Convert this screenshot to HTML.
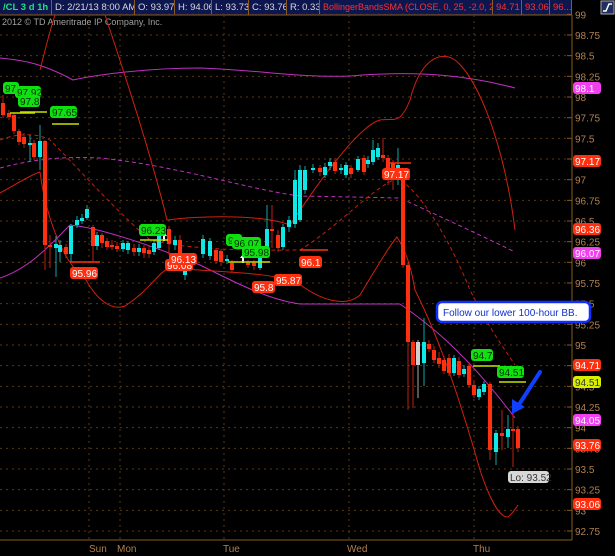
<!DOCTYPE html>
<html><head><meta charset="utf-8">
<style>
body{margin:0;background:#000;width:615px;height:556px;overflow:hidden;font-family:"Liberation Sans",sans-serif}
#hdr{position:absolute;left:0;top:0;width:572px;height:15px;background:#0e1650;font-size:9.5px;line-height:15px;white-space:nowrap}
#hdr div{position:absolute;top:0;height:15px;overflow:hidden;border-right:1px solid #8a5a20;padding-left:3px;box-sizing:border-box;color:#d8d8d8}
</style></head><body>
<div id="hdr">
<div style="left:0;width:52px;color:#20e080;font-weight:bold">/CL 3 d 1h</div>
<div style="left:52px;width:83px">D: 2/21/13 8:00 AM</div>
<div style="left:135px;width:40px">O: 93.97</div>
<div style="left:175px;width:37px">H: 94.06</div>
<div style="left:212px;width:37px">L: 93.73</div>
<div style="left:249px;width:38px">C: 93.76</div>
<div style="left:287px;width:33px">R: 0.33</div>
<div style="left:320px;width:173px;color:#ff3030;font-size:9px">BollingerBandsSMA (CLOSE, 0, 25, -2.0, 2.0)</div>
<div style="left:493px;width:29px;color:#ff3030">94.71</div>
<div style="left:522px;width:28px;color:#ff3030">93.06</div>
<div style="left:550px;width:22px;color:#ff3030">96...</div>
</div>
<svg id="s" width="615" height="556" style="position:absolute;left:0;top:0" font-family="Liberation Sans, sans-serif">
<rect x="601" y="1" width="13" height="13" fill="#203060" stroke="#aaa"/>
<path d="M603 11h3l3-7h3" stroke="#fff" fill="none" stroke-width="1.5"/>
<text x="2" y="25" fill="#a0a0a0" font-size="9">2012 © TD Ameritrade IP Company, Inc.</text>
<line x1="0" y1="15" x2="572" y2="15" stroke="#8a5a20"/>
<line x1="572" y1="15" x2="572" y2="540" stroke="#8a5a20"/>
<line x1="0" y1="540" x2="572" y2="540" stroke="#8a5a20"/>
<g id="grid"></g>
<g fill="none" stroke-width="1">
<path d="M0,58 C20,60 40,62 73,80 C100,74 150,68 200,68 C260,70 300,78 350,76 C420,70 470,76 515,88" stroke="#c030c0"/>
<path d="M0,168 C30,160 60,156 100,158 C180,166 250,190 300,196 L400,198 C430,212 470,230 515,252" stroke="#c030c0" stroke-dasharray="4,3"/>
<path d="M0,278 C30,268 50,245 70,225 C100,228 150,245 200,265 C240,285 270,300 300,304 L400,304 C420,318 460,345 515,418" stroke="#c030c0"/>
<path d="M0,140 C20,132 40,134 50,140 C80,170 110,205 150,240 C200,252 270,250 300,250 C340,225 370,190 397,178 C420,190 450,240 470,290 C490,330 505,350 515,365" stroke="#c02010" stroke-dasharray="4,3"/>
<path d="M40,70 C45,50 50,30 55,15 M105,15 C120,60 150,150 167,220 C200,216 260,214 290,225 C320,180 360,125 380,120 C395,118 400,125 410,100 C420,60 440,50 455,60 C480,80 505,150 515,230" stroke="#d02010"/>
<path d="M0,193 C15,185 30,175 40,172 C45,210 60,260 86,280 C100,305 115,310 125,306 C150,290 160,270 170,268 C220,272 270,272 298,283 C320,300 345,308 360,295 C375,270 390,245 397,237 C405,250 410,262 415,290 C440,340 460,400 480,470 C490,500 500,518 508,517 C513,513 518,505 518,505" stroke="#d02010"/>
</g>
<g id="c"></g>
<g id="lab" font-size="10"></g>
<rect x="437" y="302" width="153" height="20" rx="5" fill="#fff" stroke="#1030ff" stroke-width="2.5"/>
<text x="443" y="316" font-size="10" fill="#1030d0">Follow our lower 100-hour BB.</text>
<path d="M540,372 L520,403" stroke="#1040ff" stroke-width="4" stroke-linecap="round"/>
<path d="M512,414 L512,399 L525,407 Z" fill="#1040ff"/>
</svg>
<script>
var s=document.getElementById('s'),NS='http://www.w3.org/2000/svg';
function el(p,t,a,txt){var e=document.createElementNS(NS,t);for(var k in a)e.setAttribute(k,a[k]);if(txt)e.textContent=txt;document.getElementById(p).appendChild(e);return e;}
function y(p){return 35+(98.75-p)*82.67;}
for(var p=99;p>=92.74;p-=0.25){var yy=y(p);el('grid','line',{x1:0,x2:567,y1:yy,y2:yy,stroke:'#5a3a10','stroke-dasharray':'2,4'});
 var t=(Math.round(p*100)/100).toString();el('grid','line',{x1:567,x2:572,y1:yy,y2:yy,stroke:'#8a5a20'});el('grid','text',{x:575,y:yy+4,fill:'#b08050','font-size':10},t);}
[89,120,224,349,474].forEach(function(x){el('grid','line',{x1:x,x2:x,y1:15,y2:540,stroke:'#5a3a10','stroke-dasharray':'2,4'});});
[['Sun',89],['Mon',117],['Tue',223],['Wed',347],['Thu',473]].forEach(function(d){el('grid','text',{x:d[1],y:552,fill:'#b08050','font-size':10},d[0]);});
var C=[[3,103,115,95,118,'r'],[9,113,117,110,120,'r'],[14,115,131,113,134,'r'],[19,131,142,129,145,'r'],[24,137,144,133,148,'r'],[30,143,145,135,162,'c'],[34,143,157,140,160,'r'],[40,141,157,125,170,'c'],[45,141,245,140,270,'r'],[50,245,247,235,268,'r'],[56,244,248,236,277,'c'],[60,245,252,240,262,'c'],[66,247,254,244,258,'r'],[71,226,254,224,262,'c'],[77,220,225,216,228,'c'],[82,218,221,214,224,'c'],[87,209,218,205,220,'c'],[93,227,246,225,262,'r'],[97,235,246,232,250,'c'],[102,235,243,233,248,'r'],[107,241,247,238,250,'r'],[112,245,247,240,250,'r'],[117,246,249,242,252,'r'],[123,243,249,240,252,'c'],[128,243,250,241,254,'c'],[134,248,252,244,256,'r'],[139,248,252,244,256,'c'],[144,248,253,245,258,'r'],[149,250,254,246,258,'r'],[154,243,252,240,255,'c'],[159,235,248,230,250,'c'],[169,229,244,226,255,'r'],[175,240,245,236,250,'c'],[180,240,256,235,270,'r'],[185,262,275,258,280,'c'],[203,239,254,235,258,'c'],[210,241,256,238,260,'c'],[216,250,261,248,264,'r'],[221,251,262,249,266,'r'],[227,259,261,255,264,'c'],[232,263,270,260,273,'r'],[248,263,265,260,268,'r'],[254,263,266,260,270,'r'],[260,254,268,250,270,'c'],[267,229,247,205,250,'c'],[272,229,231,205,248,'r'],[278,235,248,230,252,'r'],[283,227,247,224,250,'c'],[289,220,227,216,232,'c'],[295,180,224,170,228,'c'],[300,170,220,165,222,'c'],[305,170,190,166,194,'c'],[313,168,170,164,173,'c'],[320,168,172,165,176,'r'],[325,167,175,163,178,'c'],[330,162,166,158,170,'c'],[335,162,171,158,174,'r'],[341,168,170,164,174,'c'],[346,165,175,162,178,'c'],[351,168,174,165,178,'r'],[358,159,170,156,172,'c'],[364,158,172,155,175,'r'],[368,160,164,156,168,'c'],[373,150,162,140,165,'c'],[378,148,157,143,160,'c'],[383,155,158,138,162,'r'],[388,158,168,155,185,'r'],[393,163,170,160,190,'r'],[398,165,180,148,185,'c'],[403,178,265,175,268,'r'],[408,265,342,262,410,'r'],[413,342,365,340,408,'r'],[418,342,365,340,398,'w'],[424,342,363,318,386,'c'],[429,344,349,340,352,'r'],[434,350,360,346,363,'r'],[439,358,364,352,368,'r'],[444,360,371,356,374,'r'],[449,358,373,354,376,'r'],[454,358,373,355,376,'c'],[459,361,375,357,378,'r'],[464,369,374,365,377,'c'],[469,366,385,362,388,'r'],[474,385,395,380,398,'r'],[479,389,397,386,400,'c'],[484,384,392,381,395,'c'],[490,384,450,382,460,'r'],[496,433,452,430,465,'c'],[502,433,436,410,450,'r'],[508,429,437,415,448,'c'],[513,429,431,413,467,'r'],[518,429,448,426,452,'r']];
C.forEach(function(c){var col=c[5]=='r'?'#ff3010':c[5]=='c'?'#10e8e8':'#d0d0d0';var wc=c[5]=='r'?'#c02010':c[5]=='c'?'#10a8a8':'#aaa';
 el('c','line',{x1:c[0],x2:c[0],y1:c[3],y2:c[4],stroke:wc});el('c','rect',{x:c[0]-2,y:c[1],width:4,height:Math.max(1.5,c[2]-c[1]),fill:col});});
[[164,240],[243,262]].forEach(function(a){el('c','path',{d:'M'+a[0]+','+(a[1]-8)+' l-3,4 h2 v5 h2 v-5 h2 z',fill:'#fff'});});
function lbl(x,yy,t,bg,fg,w){el('lab','rect',{x:x,y:yy-6,width:w,height:12,rx:3,fill:bg});el('lab','text',{x:x+2,y:yy+4,fill:fg},t);}
el('lab','line',{x1:10,x2:35,y1:113,y2:113,stroke:'#c8e000','stroke-width':1.5});
el('lab','line',{x1:20,x2:47,y1:112,y2:112,stroke:'#c8e000','stroke-width':1.5});
el('lab','line',{x1:52,x2:79,y1:124,y2:124,stroke:'#c8e000','stroke-width':1.5});
el('lab','line',{x1:140,x2:168,y1:240,y2:240,stroke:'#c8e000','stroke-width':1.5});
el('lab','line',{x1:228,x2:270,y1:262,y2:262,stroke:'#c8e000','stroke-width':1.5});
el('lab','line',{x1:473,x2:500,y1:366,y2:366,stroke:'#c8e000','stroke-width':1.5});
el('lab','line',{x1:499,x2:526,y1:382,y2:382,stroke:'#c8e000','stroke-width':1.5});
el('lab','line',{x1:70,x2:100,y1:262,y2:262,stroke:'#ff3010','stroke-width':1.5});
el('lab','line',{x1:300,x2:328,y1:250,y2:250,stroke:'#ff3010','stroke-width':1.5});
el('lab','line',{x1:388,x2:411,y1:163,y2:163,stroke:'#ff3010','stroke-width':1.5});
lbl(3,88,'97',"#10e010","#003000",16);
lbl(15,92,'97.92',"#10e010","#003000",26);lbl(18,101,'97.8',"#10e010","#003000",22);lbl(50,112,'97.65',"#10e010","#003000",27);
lbl(139,230,'96.23',"#10e010","#003000",27);lbl(226,240,'96',"#10e010","#003000",16);lbl(232,243,'96.07',"#10e010","#003000",29);lbl(242,252,'95.98',"#10e010","#003000",28);
lbl(471,355,'94.7',"#10e010","#003000",22);lbl(497,372,'94.51',"#10e010","#003000",27);
lbl(70,273,'95.96',"#ff3010","#fff",28);lbl(165,265,'96.08',"#ff3010","#fff",28);lbl(169,259,'96.13',"#ff3010","#fff",28);
lbl(252,287,'95.8',"#ff3010","#fff",23);lbl(274,280,'95.87',"#ff3010","#fff",28);lbl(299,262,'96.1',"#ff3010","#fff",23);lbl(382,174,'97.17',"#ff3010","#fff",28);
lbl(508,477,'Lo: 93.52',"#d8d8d8","#333",41);
[[88,'98.1','#f040f0','#fff'],[161,'97.17','#ff3010','#fff'],[229,'96.36','#ff3010','#fff'],[253,'96.07','#f040f0','#fff'],[365,'94.71','#ff3010','#fff'],[382,'94.51','#d8f000','#333'],[420,'94.05','#f040f0','#fff'],[445,'93.76','#ff3010','#fff'],[504,'93.06','#ff3010','#fff']].forEach(function(a){lbl(573,a[0],a[1],a[2],a[3],28);});
</script>
</body></html>
